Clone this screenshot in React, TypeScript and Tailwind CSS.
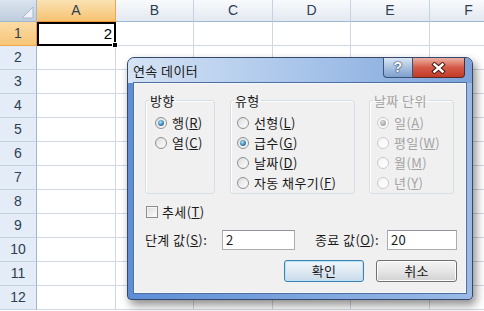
import { Fragment, useId } from "react";

const cols = ["A", "B", "C", "D", "E", "F"];
const rows = Array.from({ length: 12 }, (_, i) => i + 1);

function Sheet() {
    return (
        <div className="grid grid-cols-[37px_79px_78px_79px_78px_79px_78px] grid-rows-[22px_repeat(12,24px)] font-['Liberation_Sans',sans-serif] text-[14px] text-[#2d3e52]">
            <div className="flex items-end justify-end border-r border-b border-r-[#9eb6ce] border-b-[#9eb6ce] bg-gradient-to-b from-[#dbe3ee] to-[#bfcddd] p-[2px]">
                <svg width="13" height="13" viewBox="0 0 13 13">
                    <path d="M12 1 L12 12 L1 12 Z" fill="#eef1f5" stroke="#a9b9cb" strokeWidth="1" />
                </svg>
            </div>
            {cols.map((c) => (
                <div
                    key={c}
                    className={
                        c === "A"
                            ? "flex items-center justify-center border-r border-b border-r-[#f0a84a] border-b-[#f29536] bg-gradient-to-b from-[#fbe2b4] to-[#f5c36f]"
                            : "flex items-center justify-center border-r border-b border-r-[#c5d2e0] border-b-[#9eb6ce] bg-gradient-to-b from-[#f8fafc] to-[#e3e9f1]"
                    }
                >
                    {c}
                </div>
            ))}
            {rows.map((r) => (
                <Fragment key={r}>
                    <div
                        className={
                            r === 1
                                ? "flex items-center justify-center border-r border-b border-r-[#f29536] border-b-[#f0a84a] bg-gradient-to-b from-[#fbdca6] to-[#f6c577]"
                                : "flex items-center justify-center border-r border-b border-r-[#9eb6ce] border-b-[#c5d2e0] bg-[#e4ecf7]"
                        }
                    >
                        {r}
                    </div>
                    {cols.map((c) =>
                        r === 1 && c === "A" ? (
                            <div key={c} className="relative flex items-center justify-end border-2 border-black bg-white pr-[2px] text-[15px] text-black">
                                2
                                <span className="absolute -right-[4px] -bottom-[4px] z-10 h-[6px] w-[6px] border border-white bg-black" />
                            </div>
                        ) : (
                            <div key={c} className="border-r border-b border-[#d0d7e5] bg-white" />
                        )
                    )}
                </Fragment>
            ))}
        </div>
    );
}

function Radio({ checked = false, disabled = false }: { checked?: boolean; disabled?: boolean }) {
    const id = useId().replace(/:/g, "");
    return (
        <svg width="12" height="12" viewBox="0 0 12 12" className="shrink-0">
            <defs>
                <linearGradient id={`f${id}`} x1="0" y1="0" x2="1" y2="1">
                    <stop offset="0" stopColor={disabled ? "#f4f4f4" : "#dcdcdc"} />
                    <stop offset="1" stopColor="#ffffff" />
                </linearGradient>
                <radialGradient id={`d${id}`} cx="0.4" cy="0.35" r="0.7">
                    <stop offset="0" stopColor={disabled ? "#dcdcdc" : "#a6e3fb"} />
                    <stop offset="1" stopColor={disabled ? "#9c9c9c" : "#1b5d92"} />
                </radialGradient>
            </defs>
            <circle cx="6" cy="6" r="5.5" fill={`url(#f${id})`} stroke={disabled ? "#c9c9c9" : "#8e8f8f"} strokeWidth="1" />
            {checked && <circle cx="6" cy="6" r="3" fill={`url(#d${id})`} />}
        </svg>
    );
}

function Option({ label, mnemonic, checked, disabled }: { label: string; mnemonic: string; checked?: boolean; disabled?: boolean }) {
    return (
        <div className={`flex h-[20px] items-center gap-[5px] ${disabled ? "text-[#a3a3a3]" : "text-[#1a1a1a]"}`}>
            <Radio checked={checked} disabled={disabled} />
            <span>
                {label}(<u>{mnemonic}</u>)
            </span>
        </div>
    );
}

function Group({ title, className, padClass, disabled, children }: { title: string; className: string; padClass: string; disabled?: boolean; children: React.ReactNode }) {
    return (
        <fieldset className={`h-[102px] rounded-[3px] border border-[#d5dfe5] shadow-[inset_1px_1px_0_#ffffff] ${className}`}>
            <legend className={`ml-[3px] px-[1px] leading-[17px] ${disabled ? "text-[#a3a3a3]" : "text-[#1a1a1a]"}`}>{title}</legend>
            <div className={`flex flex-col pt-[4px] ${padClass}`}>{children}</div>
        </fieldset>
    );
}

function CaptionButtons() {
    return (
        <div className="absolute top-0 right-[7px] flex">
            <div className="flex h-[20px] w-[30px] items-center justify-center rounded-bl-[4px] border border-t-0 border-[#3b5478] bg-gradient-to-b from-[#dbe6f4] via-[#a9c2e3] to-[#7f9fcc] font-['Liberation_Sans',sans-serif] text-[14px] font-bold text-white [text-shadow:0_0_2px_#1b2c46,0_0_1px_#1b2c46]">
                ?
            </div>
            <div className="flex h-[20px] w-[52px] items-center justify-center rounded-br-[4px] border border-t-0 border-l-0 border-[#5a2a22] bg-gradient-to-b from-[#eab0a3] via-[#d45a47] to-[#c13a26]">
                <svg width="15" height="12" viewBox="0 0 15 12">
                    <path d="M3.5 2.5 L11.5 9.5 M11.5 2.5 L3.5 9.5" stroke="#4a1a14" strokeWidth="4.4" strokeLinecap="square" />
                    <path d="M3.5 2.5 L11.5 9.5 M11.5 2.5 L3.5 9.5" stroke="#ffffff" strokeWidth="2.4" strokeLinecap="square" />
                </svg>
            </div>
        </div>
    );
}

function Dialog() {
    return (
        <div className="absolute top-[57px] left-[127px] flex h-[243px] w-[346px] flex-col rounded-t-[7px] rounded-b-[4px] border border-[#34496b] bg-gradient-to-r from-[#5d8ed6] to-[#9bbae6] px-[6px] pb-[6px] shadow-[3px_5px_10px_rgba(0,0,0,0.45)] font-['Noto_Sans_CJK_KR','Noto_Sans',sans-serif] text-[13px] tracking-[0.4px]">
            <div className="-mx-[6px] flex h-[25px] shrink-0 items-center rounded-t-[6px] bg-gradient-to-r from-[#d5e3f4] via-[#a9c5ea] to-[#7da3da] pl-[5px] text-[#1a1a1a]">
                연속 데이터
            </div>
            <CaptionButtons />
            <div className="flex flex-1 flex-col border border-[#f4f7fb] bg-[#f0f0f0] pt-[8px] pr-[8px] pl-[10px] ring-1 ring-[#4f6fa0]">
                <div className="flex items-start">
                    <Group title="방향" className="w-[70px]" padClass="pl-[9px]">
                        <Option label="행" mnemonic="R" checked />
                        <Option label="열" mnemonic="C" />
                    </Group>
                    <Group title="유형" className="ml-[15px] w-[125px]" padClass="pl-[6px]">
                        <Option label="선형" mnemonic="L" />
                        <Option label="급수" mnemonic="G" checked />
                        <Option label="날짜" mnemonic="D" />
                        <Option label="자동 채우기" mnemonic="F" />
                    </Group>
                    <Group title="날짜 단위" className="ml-[14px] w-[85px]" padClass="pl-[7px]" disabled>
                        <Option label="일" mnemonic="A" checked disabled />
                        <Option label="평일" mnemonic="W" disabled />
                        <Option label="월" mnemonic="M" disabled />
                        <Option label="년" mnemonic="Y" disabled />
                    </Group>
                </div>
                <div className="mt-[8px] ml-[1px] flex h-[20px] items-center gap-[4px] text-[#1a1a1a]">
                    <span className="h-[12px] w-[12px] border border-[#8e8f8f] bg-gradient-to-br from-[#dcdcdc] to-[#ffffff] shadow-[inset_0_0_0_1px_#f4f4f4]" />
                    <span>
                        추세(<u>T</u>)
                    </span>
                </div>
                <div className="mt-[8px] flex h-[20px] items-center text-[#1a1a1a]">
                    <span className="w-[77px]">
                        단계 값(<u>S</u>):
                    </span>
                    <div className="flex h-[20px] w-[73px] items-center border border-[#abadb3] border-t-[#8f939c] bg-white pl-[3px]">2</div>
                    <span className="ml-[20px] w-[72px]">
                        종료 값(<u>O</u>):
                    </span>
                    <div className="flex h-[20px] w-[70px] items-center border border-[#abadb3] border-t-[#8f939c] bg-white pl-[3px]">20</div>
                </div>
                <div className="mt-[10px] flex justify-end text-[#1a1a1a]">
                    <button className="h-[22px] w-[80px] rounded-[3px] border border-[#3c7fb1] bg-gradient-to-b from-[#eef6fb] via-[#dfeaf3] to-[#c9dbe9] shadow-[inset_0_0_0_1px_#bde3f7]">
                        확인
                    </button>
                    <button className="ml-[12px] h-[22px] w-[81px] rounded-[3px] border border-[#707070] bg-gradient-to-b from-[#f4f4f4] via-[#e6e6e6] to-[#d2d2d2] shadow-[inset_0_0_0_1px_#fcfcfc]">
                        취소
                    </button>
                </div>
            </div>
        </div>
    );
}

export default function App() {
    return (
        <div className="relative h-[311px] w-[484px] overflow-hidden bg-white">
            <Sheet />
            <Dialog />
        </div>
    );
}
